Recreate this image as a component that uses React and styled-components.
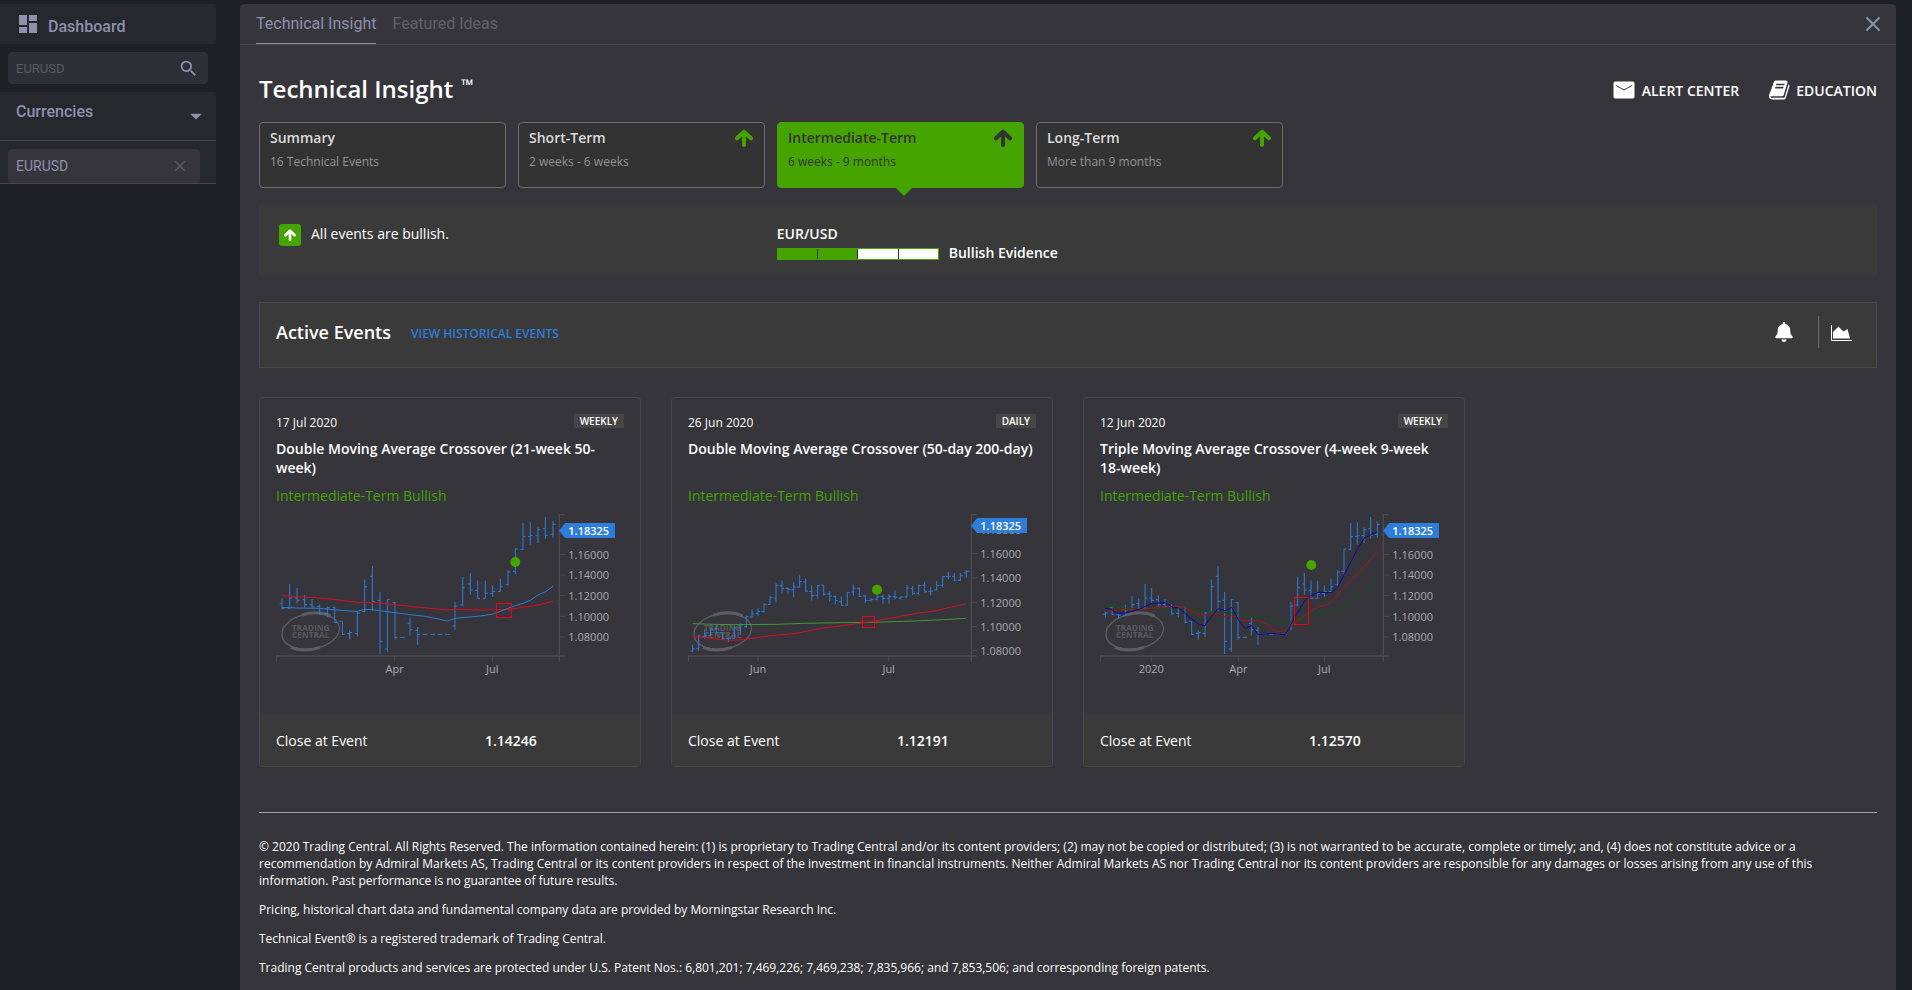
import React, { useState } from 'react';
import styled, { createGlobalStyle, css } from 'styled-components';
import { MdDashboard, MdSearch, MdArrowDropDown } from 'react-icons/md';
import { FaBell } from 'react-icons/fa';
import { X } from 'lucide-react';

const colors = {
  page: '#1f2025',
  side: '#27282d',
  field: '#2f2f37',
  panel: '#36353b',
  card: '#333333',
  band: '#3a3a3a',
  line: '#48474c',
  lilac: '#8e90ae',
  green: '#45a400',
  blue: '#2d7ddb',
};

const GlobalStyle = createGlobalStyle`
  * {
    box-sizing: border-box;
  }

  body {
    margin: 0;
    background: ${colors.page};
    color: #fff;
    font-family: 'Open Sans', sans-serif;
    font-size: 14px;
    line-height: 19px;
  }

  button,
  input {
    padding: 0;
    border: 0;
    background: none;
    color: inherit;
    font: inherit;
    text-align: left;
  }

  button {
    cursor: pointer;
  }

  a {
    color: inherit;
    text-decoration: none;
  }

  h1, h2, h3, p {
    margin: 0;
  }

  svg {
    display: block;
    flex: none;
  }
`;

const Layout = styled.div`
  display: flex;
  gap: 24px;
  min-height: 100vh;
  padding: 4px 16px 0 0;
`;

/* sidebar */

const Sidebar = styled.aside`
  display: flex;
  flex: none;
  flex-direction: column;
  gap: 8px;
  width: 216px;
  color: ${colors.lilac};
  font-family: Roboto, sans-serif;
`;

const DashboardLink = styled.a`
  display: flex;
  align-items: center;
  gap: 8px;
  height: 40px;
  padding: 0 16px;
  border-radius: 0 4px 4px 0;
  background: ${colors.side};
  font-size: 16px;
  font-weight: 500;

  span {
    padding-top: 4px;
  }
`;

const SearchBox = styled.label`
  display: flex;
  align-items: center;
  height: 32px;
  margin: 0 8px;
  padding: 0 9px 0 8px;
  border-radius: 4px;
  background: ${colors.field};

  input {
    flex: 1;
    min-width: 0;
    outline: none;
    font-size: 13px;
  }

  input::placeholder {
    color: #5b5b60;
    opacity: 1;
  }
`;

const Group = styled.section`
  border-bottom: 1px solid ${colors.line};
  border-radius: 0 4px 0 0;
  background: ${colors.side};
`;

const GroupToggle = styled.button`
  display: flex;
  justify-content: space-between;
  width: 100%;
  height: 49px;
  padding: 10px 6px 0 16px;
  border-bottom: 1px solid ${colors.line};
  font-size: 16px;
  font-weight: 500;
`;

const Symbol = styled.div`
  display: flex;
  align-items: center;
  justify-content: space-between;
  height: 34px;
  margin: 8px 16px 0 8px;
  padding: 0 11px 0 8px;
  border-radius: 4px;
  background: ${colors.panel};

  button:last-child {
    color: #5c5c62;
  }
`;

/* main panel */

const Panel = styled.main`
  flex: 1;
  min-width: 0;
  border-radius: 4px 4px 0 0;
  background: ${colors.panel};
`;

const TabBar = styled.nav`
  display: flex;
  align-items: center;
  gap: 16px;
  height: 41px;
  padding: 0 11px 0 16px;
  border-bottom: 1px solid ${colors.line};
  color: ${colors.lilac};
`;

const Tab = styled.button`
  height: 40px;
  border-bottom: 1px solid ${({ $active }) => ($active ? colors.lilac : 'transparent')};
  color: ${({ $active }) => ($active ? colors.lilac : '#62616e')};
  font-family: Roboto, sans-serif;
  font-size: 16px;
`;

const CloseButton = styled.button`
  margin-left: auto;
`;

const Content = styled.div`
  padding: 28px 19px 0;
`;

const Heading = styled.header`
  display: flex;
  align-items: center;
  justify-content: space-between;
  height: 32px;

  h1 {
    display: flex;
    gap: 8px;
    font-size: 24px;
    font-weight: 600;
    line-height: 32px;
  }

  sup {
    font-size: 16px;
    font-weight: 700;
    line-height: 24px;
  }
`;

const HeadLinks = styled.div`
  display: flex;
  gap: 30px;
  padding-top: 2px;

  a {
    display: flex;
    align-items: center;
    gap: 5px;
    font-weight: 600;
  }
`;

const Terms = styled.div`
  display: flex;
  gap: 12px;
  margin-top: 17px;
`;

const Term = styled.button`
  position: relative;
  display: flex;
  align-items: flex-start;
  justify-content: space-between;
  width: 247px;
  height: 66px;
  padding: 5px 11px 5px 10px;
  border: 1px solid #6c6c6e;
  border-radius: 4px;
  background: ${colors.card};
  color: #dcdcdc;

  strong {
    display: block;
    font-weight: 600;
  }

  small {
    display: block;
    margin-top: 5px;
    color: #939393;
    font-size: 12px;
  }

  svg {
    margin-top: 1px;
    color: ${colors.green};
  }

  ${({ $active }) =>
    $active &&
    css`
      border-color: ${colors.green};
      background: ${colors.green};

      strong,
      small,
      svg {
        color: #333;
      }

      &::after {
        content: '';
        position: absolute;
        top: 100%;
        left: 50%;
        border: 9px solid transparent;
        border-top-color: ${colors.green};
        border-bottom: 0;
        margin-left: -6px;
      }
    `}
`;

const Evidence = styled.section`
  display: grid;
  grid-template-columns: 32% 1fr;
  height: 72px;
  margin-top: 16px;
  padding-top: 20px;
  background: ${colors.band};
`;

const Verdict = styled.div`
  display: flex;
  align-items: flex-start;
  gap: 10px;
  padding-left: 20px;
`;

const UpBadge = styled.span`
  display: grid;
  place-items: center;
  width: 22px;
  height: 22px;
  border-radius: 3px;
  background: ${colors.green};
`;

const Score = styled.div`
  font-weight: 600;

  div {
    display: flex;
    align-items: center;
    gap: 10px;
  }
`;

const Meter = styled.span`
  display: flex;
  width: 162px;
  height: 12px;
  margin-top: 2px;
  border: 1px solid ${colors.green};
`;

const Segment = styled.i`
  flex: 1;
  background: ${({ $on }) => ($on ? colors.green : '#fff')};

  & + & {
    border-left: 1px solid ${colors.card};
  }
`;

const EventsBar = styled.section`
  display: flex;
  align-items: center;
  height: 66px;
  margin-top: 26px;
  padding: 0 24px 6px 16px;
  border: 1px solid ${colors.line};
  background: ${colors.band};

  h2 {
    margin-right: 20px;
    font-size: 18px;
    font-weight: 600;
  }

  a {
    padding-top: 3px;
    color: ${colors.blue};
    font-size: 12px;
    font-weight: 600;
  }
`;

const BarTools = styled.div`
  display: flex;
  align-items: center;
  margin-left: auto;

  button + button {
    height: 32px;
    margin-left: 24px;
    padding: 2px 0 0 12px;
    border-left: 1px solid #6b6b6b;
  }
`;

const CardGrid = styled.div`
  display: grid;
  grid-template-columns: repeat(4, 1fr);
  gap: 30px;
  margin-top: 29px;
`;

const Card = styled.article`
  overflow: hidden;
  border: 1px solid ${colors.line};
  border-radius: 4px;
`;

const CardBody = styled.div`
  height: 316px;
  padding: 16px 16px 0;

  h3 {
    min-height: 38px;
    margin-top: 8px;
    font-size: 14px;
    font-weight: 600;
    line-height: 19px;
  }
`;

const CardTop = styled.div`
  display: flex;
  align-items: flex-start;
  justify-content: space-between;
  font-size: 12px;
  line-height: 17px;
`;

const Period = styled.span`
  padding: 0 6px;
  background: #464646;
  font-size: 10px;
  font-weight: 600;
  line-height: 14px;
`;

const Bias = styled.p`
  margin: 9px 0 6px;
  color: ${colors.green};
`;

const CardFoot = styled.div`
  display: grid;
  grid-template-columns: 209px 1fr;
  height: 52px;
  padding: 17px 16px 0;
  background: ${colors.band};

  strong {
    font-weight: 600;
  }
`;

const Legal = styled.footer`
  margin-top: 45px;
  padding: 25px 0 10px;
  border-top: 1px solid #a0a0a2;
  font-size: 12px;
  line-height: 17px;

  p + p {
    margin-top: 12px;
  }
`;

/* chart data: [high, low, open, close] on a grid three times finer than the drawing */

const flat = y => [y, y, y, y];

const weekly = [
  [323, 356, 338, 352],
  [279, 355, 352, 321],
  [291, 337, 321, 328],
  [313, 350, 326, 341],
  [324, 350, 341, 348],
  [340, 372, 346, 368],
  [346, 379, 367, 350],
  [349, 396, 349, 394],
  [391, 432, 391, 430],
  [418, 446, 427, 425],
  [360, 437, 427, 366],
  [266, 364, 362, 287],
  [225, 360, 256, 331],
  [303, 489, 328, 451],
  [325, 483, 474, 325],
  [333, 446, 335, 439],
  flat(439),
  [380, 434, 397, 416],
  [408, 462, 418, 430],
  flat(430),
  flat(430),
  flat(430),
  flat(430),
  [333, 417, 405, 345],
  [258, 346, 342, 290],
  [246, 311, 279, 297],
  [268, 323, 298, 322],
  [269, 322, 322, 307],
  [283, 318, 307, 301],
  [263, 302, 301, 287],
  [238, 284, 281, 243],
  [173, 250, 241, 174],
  [96, 177, 175, 137],
  [94, 161, 136, 134],
  [109, 156, 134, 116],
  [78, 143, 113, 133],
  [91, 140, 130, 100],
];

const earlier = [
  [361, 380, 370, 366],
  [348, 372, 350, 370],
  [367, 381, 371, 372],
  [341, 374, 374, 358],
  [315, 356, 356, 341],
];

const daily = [
  [461, 483, 480, 474],
  [432, 480, 472, 436],
  [415, 444, 436, 433],
  [410, 434, 433, 414],
  [402, 428, 412, 425],
  [424, 447, 425, 443],
  [438, 453, 443, 443],
  [407, 444, 442, 410],
  [397, 432, 411, 401],
  [373, 410, 407, 377],
  [355, 380, 378, 369],
  [352, 374, 367, 361],
  [336, 365, 362, 340],
  [315, 341, 340, 320],
  [277, 335, 321, 284],
  [268, 308, 284, 292],
  [290, 308, 292, 295],
  [274, 319, 296, 288],
  [253, 290, 288, 272],
  [262, 303, 273, 300],
  [283, 329, 301, 314],
  [282, 323, 313, 283],
  [281, 314, 283, 310],
  [301, 331, 309, 315],
  [313, 340, 317, 329],
  [316, 344, 331, 343],
  [303, 344, 342, 305],
  [280, 314, 303, 292],
  [289, 318, 292, 316],
  [312, 335, 315, 328],
  [321, 332, 328, 325],
  [300, 328, 325, 318],
  [312, 338, 317, 322],
  [309, 338, 322, 317],
  [298, 325, 317, 319],
  [316, 326, 321, 318],
  [282, 319, 318, 291],
  [285, 312, 293, 307],
  [280, 311, 307, 284],
  [272, 305, 283, 302],
  [289, 313, 302, 300],
  [270, 297, 297, 283],
  [255, 289, 283, 257],
  [243, 264, 257, 256],
  [246, 271, 256, 267],
  [246, 270, 268, 254],
  [237, 260, 246, 241],
];

const events = [
  {
    date: '17 Jul 2020',
    period: 'WEEKLY',
    title: 'Double Moving Average Crossover (21-week 50-week)',
    close: '1.14246',
    chart: {
      left: 78,
      bars: weekly,
      first: 96,
      last: 909,
      lines: [
        { color: '#dc0c1e', points: '96,314 164,318 232,323 322,334 380,335 434,341 500,348 560,354 593,357 615,355 700,357 774,356 819,349 864,342 909,331' },
        { color: '#2d7ddb', points: '96,349 141,351 209,352 270,358 322,361 345,355 367,356 412,362 480,371 525,376 570,385 593,390 615,382 661,378 706,373 728,369 751,361 774,352 796,344 819,337 841,328 864,312 886,302 909,286' },
      ],
      yTicks: [190, 252, 314, 376, 438],
      price: 119,
      xTicks: [[434, 'Apr'], [727, 'Jul']],
      dot: [796, 213],
      box: [739, 338, 46, 40],
    },
  },
  {
    date: '26 Jun 2020',
    period: 'DAILY',
    title: 'Double Moving Average Crossover (50-day 200-day)',
    close: '1.12191',
    chart: {
      left: 84,
      bars: daily,
      first: 98,
      last: 919,
      lines: [
        { color: '#3f9a2e', points: '98,398 160,400 220,401 350,400 430,397 540,395 640,394 760,390 850,386 919,382' },
        { color: '#dc0c1e', points: '98,435 151,442 205,448 250,446 331,434 402,428 491,411 563,402 634,392 706,379 776,366 829,359 865,350 919,338' },
      ],
      yTicks: [188, 261, 334, 407, 479],
      hiddenTick: 115,
      price: 104,
      xTicks: [[294, 'Jun'], [686, 'Jul']],
      dot: [651, 296],
      box: [606, 377, 38, 32],
    },
  },
  {
    date: '12 Jun 2020',
    period: 'WEEKLY',
    title: 'Triple Moving Average Crossover (4-week 9-week 18-week)',
    close: '1.12570',
    chart: {
      left: 90,
      bars: [...earlier, ...weekly],
      first: 106,
      last: 922,
      lines: [
        { color: '#0f570f', points: '106,344 146,349 206,355 265,352 345,350 385,361 445,363 505,366 545,373 585,383 625,395 650,399 675,384 704,380 744,367 803,359 850,329 892,293 922,264' },
        { color: '#a31712', points: '106,361 146,357 206,355 265,350 325,347 350,353 385,369 404,371 445,367 465,378 485,374 525,389 565,388 585,396 605,413 625,422 642,420 665,403 704,375 740,349 764,344 785,332 813,299 844,264 883,227 922,181' },
        { color: '#0a0a9e', points: '106,352 124,354 140,367 166,366 206,355 226,346 246,337 286,335 310,350 325,350 365,384 385,399 404,404 424,377 445,353 465,359 485,349 505,386 525,413 545,404 565,431 605,428 646,431 665,396 704,329 724,313 744,304 785,305 803,289 824,248 844,210 863,173 883,141 922,122' },
      ],
      yTicks: [190, 252, 314, 376, 438],
      price: 119,
      xTicks: [[244, '2020'], [505, 'Apr'], [763, 'Jul']],
      dot: [724, 222],
      box: [674, 319, 41, 81],
    },
  },
];

const yLabels = ['1.16000', '1.14000', '1.12000', '1.10000', '1.08000'];

const terms = [
  { id: 'summary', label: 'Summary', note: '16 Technical Events' },
  { id: 'short', label: 'Short-Term', note: '2 weeks - 6 weeks', up: true },
  { id: 'mid', label: 'Intermediate-Term', note: '6 weeks - 9 months', up: true },
  { id: 'long', label: 'Long-Term', note: 'More than 9 months', up: true },
];

/* drawings */

const ArrowUp = ({ size = 18 }) => (
  <svg width={size} height={size} viewBox="0 0 18 18" fill="none" stroke="currentColor" strokeWidth="4">
    <path d="M2 9.300 9 2.700l7 6.600" strokeLinecap="round" strokeLinejoin="round" />
    <path d="M9 4v12" strokeLinecap="round" />
  </svg>
);

const MailIcon = () => (
  <svg width="24" height="18" viewBox="0 0 24 18">
    <rect width="21" height="17" x=".5" y=".5" rx="2" fill="#fff" />
    <path d="M3 4.500 11 9l8-4.500" fill="none" stroke={colors.panel} />
  </svg>
);

const BookIcon = () => (
  <svg width="22" height="22" viewBox="0 0 1792 1792" fill="#fff">
    <path d="M1639 478q40 57 18 129l-275 906q-19 64-76.5 107.5t-122.5 43.5h-923q-77 0-148.5-53.5t-99.5-131.5q-24-67-2-127 0-4 3-27t4-37q1-8-3-21.5t-3-19.5q2-11 8-21t16.5-23.5 16.5-23.5q23-38 45-91.5t30-91.5q3-10 .5-30t-.5-28q3-11 17-28t17-23q21-36 42-92t25-90q1-9-2.5-32t.5-28q4-13 22-30.5t22-22.5q19-26 42.5-84.5t27.5-96.5q1-8-3-25.5t-2-26.5q2-8 9-18t18-23 17-21q8-12 16.5-30.5t15-35 16-36 19.5-32 26.5-23.5 36-11.5 47.5 5.5l-1 3q38-9 51-9h761q74 0 114 56t18 130l-274 906q-36 119-71.5 153.5t-128.5 34.5h-869q-27 0-38 15-11 16-1 43 24 70 144 70h923q29 0 56-15.5t35-41.5l300-987q7-22 5-57 38 15 59 43zm-1064 2q-4 13 2 22.5t20 9.5h608q13 0 25.5-9.5t16.5-22.5l21-64q4-13-2-22.5t-20-9.5h-608q-13 0-25.5 9.5t-16.5 22.5zm-83 256q-4 13 2 22.5t20 9.5h608q13 0 25.5-9.5t16.5-22.5l21-64q4-13-2-22.5t-20-9.5h-608q-13 0-25.5 9.5t-16.5 22.5z" />
  </svg>
);

const AreaIcon = () => (
  <svg width="21" height="16" viewBox="0 0 21 16">
    <path d="M.5 0v15.500H21" fill="none" stroke="#fff" />
    <path d="M2 13.500V7l5.500-5.500 5 5L16.500 4l2.500 9.500z" fill="#fff" />
  </svg>
);

const Watermark = ({ x }) => (
  <g fill="#5a595e">
    <g transform={`translate(${x} 421) rotate(-9)`} fill="none" stroke="#5e5d62">
      <ellipse rx="87" ry="53" strokeWidth="4" />
      <path d="M-66 38A87 52 0 0 0 20 52M-20 -52A87 52 0 0 1 66 -36" strokeWidth="9" />
    </g>
    <text y="419" fontSize="25" fontWeight="700" textAnchor="middle">
      <tspan x={x}>TRADING</tspan>
      <tspan x={x} dy="23">CENTRAL</tspan>
    </text>
  </g>
);

const Chart = ({ chart }) => {
  const { left, bars, first, last, lines, yTicks, hiddenTick, price, xTicks, dot, box } = chart;
  const axis = left + 850;
  const step = (last - first) / (bars.length - 1);
  const path = bars
    .map(([high, low, open, close], i) => {
      const x = Math.round(first + i * step);
      return `M${x} ${high}V${low}M${x - 7} ${open}H${x}M${x} ${close}h7`;
    })
    .join('');

  return (
    <svg width="348" height="170" viewBox={`${left} 60 1044 510`} fontFamily="Open Sans" fontSize="33">
      <Watermark x={left + 104} />
      <g fill="none" stroke="#4c4b50" strokeWidth="4">
        <path d={`M${axis + 16} 71h-16V512M${left + 1} 512v-17H${axis + 16}`} />
        {yTicks.map(y => <path key={y} d={`M${axis} ${y}h17`} strokeWidth="3" />)}
        {xTicks.map(([x]) => <path key={x} d={`M${x} 495v17`} strokeWidth="3" />)}
      </g>
      <path d={path} stroke={colors.blue} strokeWidth="3" fill="none" />
      {lines.map(line => (
        <polyline key={line.color} points={line.points} fill="none" stroke={line.color} strokeWidth="3" />
      ))}
      <circle cx={dot[0]} cy={dot[1]} r="15" fill={colors.green} />
      <rect
        x={box[0]}
        y={box[1]}
        width={box[2]}
        height={box[3]}
        fill="none"
        stroke="#f00010"
        strokeWidth="3"
        shapeRendering="crispEdges"
      />
      <g fill="#aaaaac">
        {yTicks.map((y, i) => <text key={y} x={axis + 27} y={y + 13}>{yLabels[i]}</text>)}
        {hiddenTick && <text x={axis + 27} y={hiddenTick + 13}>1.18000</text>}
        {xTicks.map(([x, label]) => <text key={x} x={x} y="546" textAnchor="middle">{label}</text>)}
      </g>
      <path d={`M${axis - 1} ${price}l18-23h150v45h-150z`} fill={colors.blue} />
      <text x={axis + 27} y={price + 13} fill="#fff" fontWeight="600">1.18325</text>
    </svg>
  );
};

const EventCard = ({ event }) => (
  <Card>
    <CardBody>
      <CardTop>
        <time>{event.date}</time>
        <Period>{event.period}</Period>
      </CardTop>
      <h3>{event.title}</h3>
      <Bias>Intermediate-Term Bullish</Bias>
      <Chart chart={event.chart} />
    </CardBody>
    <CardFoot>
      <span>Close at Event</span>
      <strong>{event.close}</strong>
    </CardFoot>
  </Card>
);

const App = () => {
  const [term, setTerm] = useState('mid');
  const [query, setQuery] = useState('');

  return (
    <>
      <GlobalStyle />
      <Layout>
        <Sidebar>
          <DashboardLink href="#dashboard">
            <MdDashboard size={24} />
            <span>Dashboard</span>
          </DashboardLink>
          <SearchBox>
            <input
              aria-label="Search symbols"
              placeholder="EURUSD"
              value={query}
              onChange={e => setQuery(e.target.value)}
            />
            <MdSearch size={21} />
          </SearchBox>
          <Group>
            <GroupToggle>
              Currencies
              <MdArrowDropDown size={28} />
            </GroupToggle>
            <Symbol>
              <button>EURUSD</button>
              <button aria-label="Remove EURUSD">
                <X size={18} strokeWidth={2} />
              </button>
            </Symbol>
          </Group>
        </Sidebar>

        <Panel>
          <TabBar>
            <Tab $active>Technical Insight</Tab>
            <Tab>Featured Ideas</Tab>
            <CloseButton aria-label="Close">
              <X size={24} strokeWidth={2} />
            </CloseButton>
          </TabBar>

          <Content>
            <Heading>
              <h1>
                Technical Insight <sup>™</sup>
              </h1>
              <HeadLinks>
                <a href="#alerts">
                  <MailIcon />
                  ALERT CENTER
                </a>
                <a href="#education">
                  <BookIcon />
                  EDUCATION
                </a>
              </HeadLinks>
            </Heading>

            <Terms>
              {terms.map(({ id, label, note, up }) => (
                <Term key={id} $active={id === term} onClick={() => setTerm(id)}>
                  <span>
                    <strong>{label}</strong>
                    <small>{note}</small>
                  </span>
                  {up && <ArrowUp />}
                </Term>
              ))}
            </Terms>

            <Evidence>
              <Verdict>
                <UpBadge>
                  <ArrowUp size={12} />
                </UpBadge>
                All events are bullish.
              </Verdict>
              <Score>
                EUR/USD
                <div>
                  <Meter>
                    <Segment $on />
                    <Segment $on />
                    <Segment />
                    <Segment />
                  </Meter>
                  Bullish Evidence
                </div>
              </Score>
            </Evidence>

            <EventsBar>
              <h2>Active Events</h2>
              <a href="#history">VIEW HISTORICAL EVENTS</a>
              <BarTools>
                <button aria-label="Alerts">
                  <FaBell size={20} />
                </button>
                <button aria-label="Chart">
                  <AreaIcon />
                </button>
              </BarTools>
            </EventsBar>

            <CardGrid>
              {events.map(event => (
                <EventCard key={event.date} event={event} />
              ))}
            </CardGrid>

            <Legal>
              <p>
                © 2020 Trading Central. All Rights Reserved. The information contained herein: (1) is proprietary to
                Trading Central and/or its content providers; (2) may not be copied or distributed; (3) is not warranted
                to be accurate, complete or timely; and, (4) does not constitute advice or a recommendation by Admiral
                Markets AS, Trading Central or its content providers in respect of the investment in financial
                instruments. Neither Admiral Markets AS nor Trading Central nor its content providers are responsible
                for any damages or losses arising from any use of this information. Past performance is no guarantee of
                future results.
              </p>
              <p>
                Pricing, historical chart data and fundamental company data are provided by Morningstar Research Inc.
              </p>
              <p>Technical Event® is a registered trademark of Trading Central.</p>
              <p>
                Trading Central products and services are protected under U.S. Patent Nos.: 6,801,201; 7,469,226;
                7,469,238; 7,835,966; and 7,853,506; and corresponding foreign patents.
              </p>
            </Legal>
          </Content>
        </Panel>
      </Layout>
    </>
  );
};

export default App;
